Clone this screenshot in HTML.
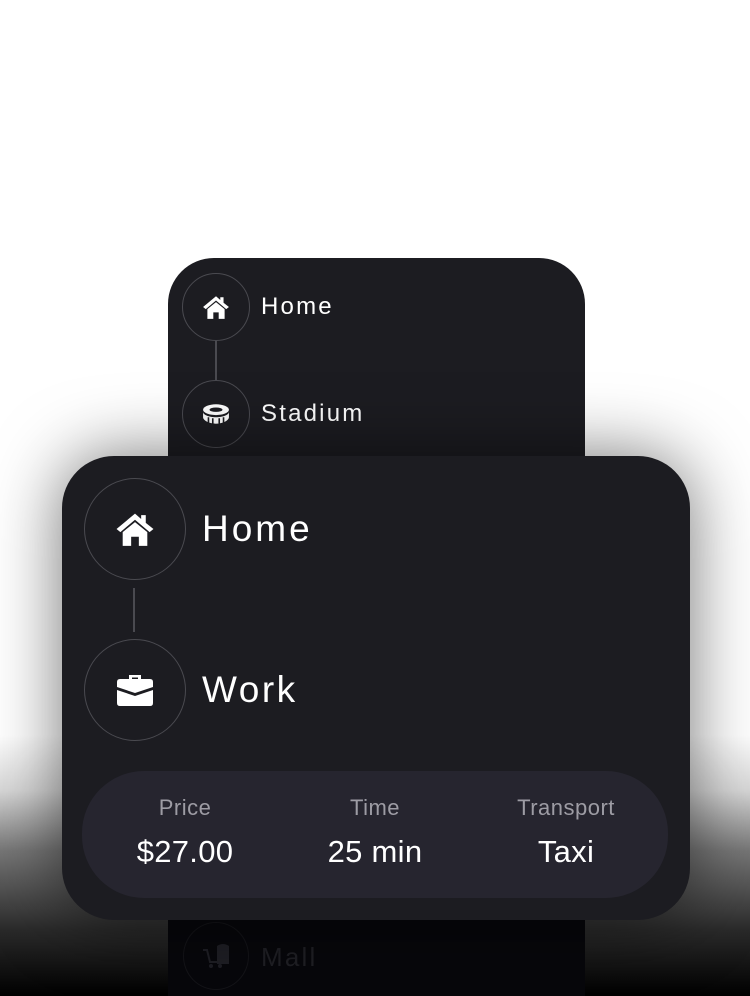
<!DOCTYPE html>
<html><head><style>
*{margin:0;padding:0;box-sizing:border-box}
body{width:750px;height:996px;overflow:hidden;position:relative;font-family:"Liberation Sans",sans-serif;
background:linear-gradient(to bottom,#fff 0,#fff 735px,#d8d8d8 790px,#777 850px,#2a2a2a 930px,#000 996px);}
.card{position:absolute;background:#1c1c21;}
.circ{position:absolute;border:1.5px solid #4a4a50;border-radius:50%;display:flex;align-items:center;justify-content:center}
.line{position:absolute;width:1.5px;background:#4a4a50}
.t{position:absolute;color:#fff;letter-spacing:2.2px}
.lab{position:absolute;color:#9d9ca4;font-size:22px;text-align:center;width:200px;letter-spacing:.5px}
.val{position:absolute;color:#fff;font-size:31px;text-align:center;width:200px;letter-spacing:.3px}
</style></head><body>
<div class="card" style="left:168px;top:258px;width:417px;height:260px;border-radius:46px 46px 0 0"></div>
<div class="circ" style="left:182px;top:273px;width:68px;height:68px">
<svg width="28" height="26" viewBox="0 0 26 24"><path d="M13 2 L1 12 L3.5 14 L13 6 L22.5 14 L25 12 L20 8 V3 H17 V5.5Z M5 14 L13 7.5 L21 14 V23 H15.5 V17 H10.5 V23 H5Z" fill="#fff"/></svg></div>
<div class="line" style="left:215px;top:341px;height:39px"></div>
<div class="circ" style="left:182px;top:380px;width:68px;height:68px">
<svg width="28" height="22" viewBox="0 0 26 20"><ellipse cx="13" cy="6" rx="12" ry="5" fill="#fff"/><ellipse cx="13" cy="6" rx="6" ry="2" fill="#1c1c21"/><path d="M1 8 V13 C1 16 7 19 13 19 C19 19 25 16 25 13 V8 C25 11 19 13 13 13 C7 13 1 11 1 8Z" fill="#fff"/><path d="M6 13 V18 M10 14 V19 M16 14 V19 M20 13 V18" stroke="#1c1c21" stroke-width="1.5"/></svg></div>
<div class="t" style="left:261px;top:293px;font-size:24px">Home</div>
<div class="t" style="left:261px;top:400px;font-size:24px">Stadium</div>

<div class="card" style="left:168px;top:900px;width:417px;height:96px;background:#07070b"></div>
<div class="circ" style="left:183px;top:922px;width:66px;height:68px;border-color:#141418">
<svg width="30" height="28" viewBox="0 0 30 28"><path d="M2 8 H6 L9 20 H20" stroke="#1e1e24" stroke-width="2" fill="none"/><circle cx="10" cy="24" r="2" fill="#1e1e24"/><circle cx="19" cy="24" r="2" fill="#1e1e24"/><path d="M16 4 Q22 0 28 4 V22 H16Z" fill="#1e1e24"/></svg></div>
<div class="t" style="left:261px;top:942px;font-size:26px;color:#1f1f24">Mall</div>

<div class="card" style="left:62px;top:456px;width:628px;height:464px;border-radius:52px;box-shadow:0 0 70px rgba(0,0,0,.55)"></div>
<div class="circ" style="left:84px;top:478px;width:102px;height:102px">
<svg width="40" height="38" viewBox="0 0 26 24"><path d="M13 2 L1 12 L3.5 14 L13 6 L22.5 14 L25 12 L20 8 V3 H17 V5.5Z M5 14 L13 7.5 L21 14 V23 H15.5 V17 H10.5 V23 H5Z" fill="#fff"/></svg></div>
<div class="line" style="left:133px;top:588px;height:44px"></div>
<div class="circ" style="left:84px;top:639px;width:102px;height:102px">
<svg width="40" height="34" viewBox="0 0 40 34"><path d="M14 6 V2 H26 V6 H23 V4.5 H17 V6Z" fill="#fff"/><path d="M2 9 Q2 6 5 6 H35 Q38 6 38 9 V14 L20 20 L2 14Z" fill="#fff"/><path d="M2 17 L20 23 L38 17 V30 Q38 33 35 33 H5 Q2 33 2 30Z" fill="#fff"/></svg></div>
<div class="t" style="left:202px;top:508px;font-size:37px;letter-spacing:3px">Home</div>
<div class="t" style="left:202px;top:669px;font-size:37px;letter-spacing:2.5px">Work</div>

<div style="position:absolute;left:82px;top:771px;width:586px;height:127px;border-radius:62px;background:#26252f"></div>
<div class="lab" style="left:85px;top:795px">Price</div>
<div class="lab" style="left:275px;top:795px">Time</div>
<div class="lab" style="left:466px;top:795px">Transport</div>
<div class="val" style="left:85px;top:834px">$27.00</div>
<div class="val" style="left:275px;top:834px">25 min</div>
<div class="val" style="left:466px;top:834px">Taxi</div>
</body></html>
